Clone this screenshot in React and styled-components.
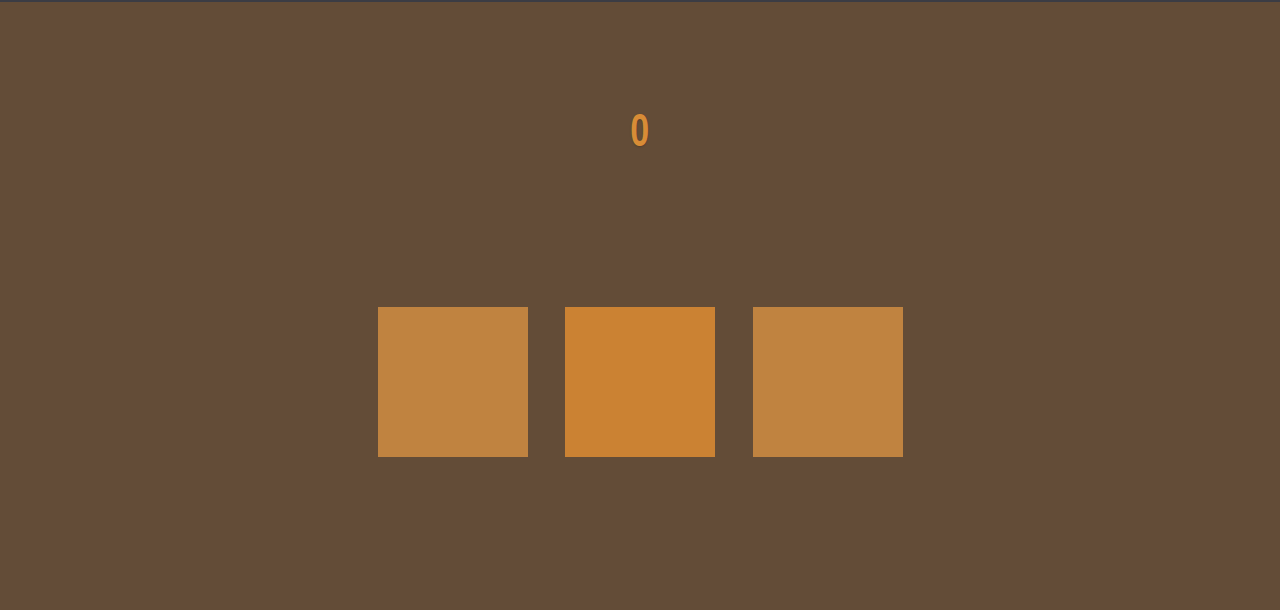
import React from "react";
import styled, { createGlobalStyle } from "styled-components";

const Global = createGlobalStyle`
  html, body { margin: 0; padding: 0; background: #634c37; }
  body { font-family: "Liberation Sans", Arial, sans-serif; }
`;

const Page = styled.div`
  width: 1280px;
  height: 610px;
  background: #634c37;
  border-top: 2px solid #3b3c44;
  box-sizing: border-box;
  display: flex;
  flex-direction: column;
  align-items: center;
`;

const Score = styled.div`
  margin-top: 102px;
  height: 52px;
  font-family: "Liberation Sans", Arial, sans-serif;
  font-weight: 700;
  font-size: 46px;
  line-height: 52px;
  color: #d88c36;
  transform: scaleX(0.74);
  text-shadow: 0 1px 2px rgba(60, 40, 20, 0.35);
`;

const Row = styled.div`
  margin-top: 151px;
  display: flex;
  gap: 37.5px;
`;

const Tile = styled.div`
  width: 150px;
  height: 150px;
  background: ${(p) => (p.$active ? "#cb8233" : "#c08340")};
`;

export default function App() {
  return (
    <>
      <Global />
      <Page>
        <Score>0</Score>
        <Row>
          <Tile />
          <Tile $active />
          <Tile />
        </Row>
      </Page>
    </>
  );
}
